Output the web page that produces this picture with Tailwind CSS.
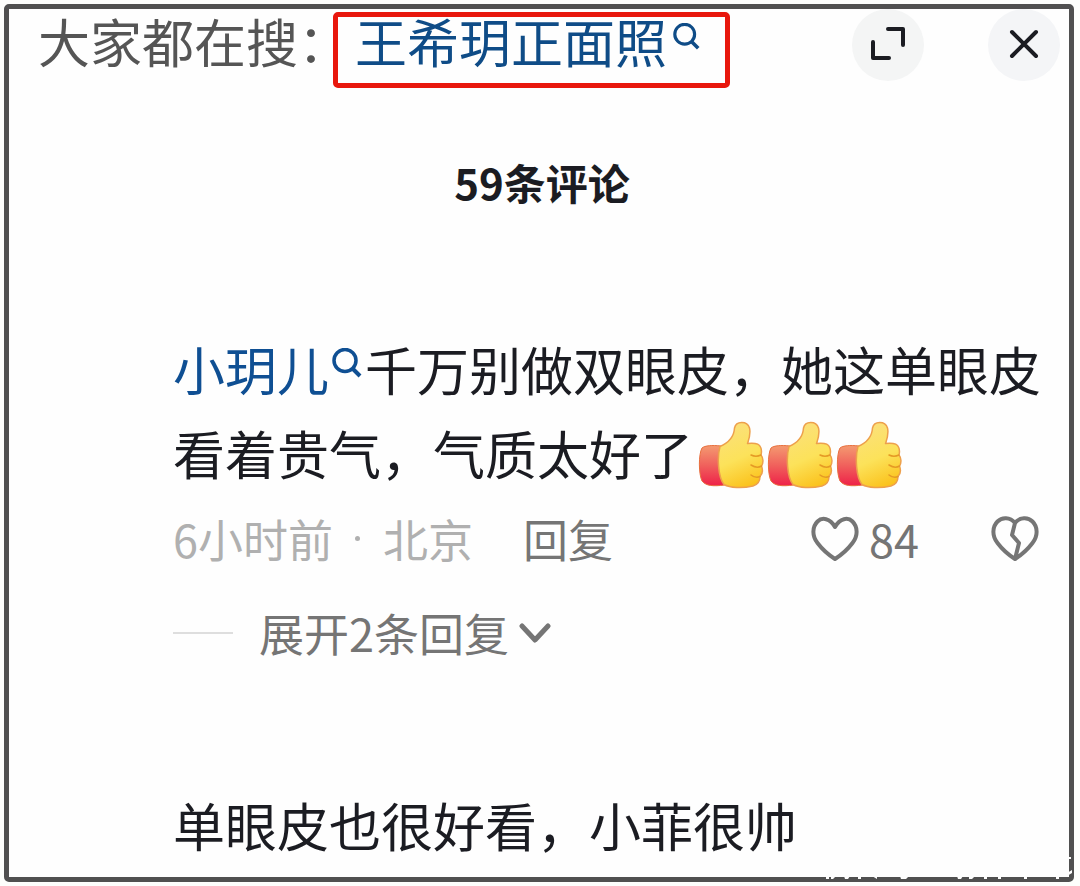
<!DOCTYPE html>
<html lang="zh-CN">
<head>
    <meta charset="UTF-8">
    <meta name="viewport" content="width=device-width, initial-scale=1.0">
    <title>59条评论</title>
    <script src="https://cdn.jsdelivr.net/npm/@tailwindcss/browser@4"></script>
</head>
<body class="bg-[#fdfefc] min-h-screen flex pt-1 pb-1 pl-1 pr-[6px] font-['Noto_Sans_CJK_SC',sans-serif] text-[#1b1c22]">
    <!-- Shared icons -->
    <svg class="absolute w-0 h-0" xmlns="http://www.w3.org/2000/svg">
        <defs>
            <linearGradient id="cuffFill" x1="0" y1="0" x2="0" y2="1">
                <stop offset="0" stop-color="#f49a70"></stop>
                <stop offset="0.5" stop-color="#f0605c"></stop>
                <stop offset="1" stop-color="#ee2148"></stop>
            </linearGradient>
            <linearGradient id="handFill" x1="0.3" y1="0" x2="0.6" y2="1">
                <stop offset="0" stop-color="#fbe07c"></stop>
                <stop offset="0.55" stop-color="#fce25a"></stop>
                <stop offset="1" stop-color="#fbc21c"></stop>
            </linearGradient>
        </defs>
        <symbol id="search" viewBox="0 0 30 30">
            <circle cx="13" cy="12.500" r="11" fill="none" stroke="currentColor" stroke-width="3.500"></circle>
            <path d="M20.500 20.500 28 28" fill="none" stroke="currentColor" stroke-width="4"></path>
        </symbol>
        <symbol id="thumb" viewBox="0 0 66 68">
            <path d="M23 25C14 24 7 24.500 4 27C0.500 33 0.500 53 4 60C8 65 15 65.500 27 64Z" fill="url(#cuffFill)" stroke="#e8703f" stroke-width="1"></path>
            <path d="M22 25.500C30 22 36 16 36.500 7C38 0 49 -0.500 51.500 7C53 13 51 18 49.500 22.500C54 22 61 22 62.500 26C64 29 63.500 32 63 34C65.500 37 65.500 42 63.500 45C65 49 64.500 53 62 55.500C62 60 60 63.500 55 65C44 67.500 32 67 26 63.500C20 56 19 36 22 25.500Z" fill="url(#handFill)" stroke="#eda04c" stroke-width="1.500" stroke-linejoin="round"></path>
            <path d="M53 34C57 36 60 35.500 63 34M53 44C57 46.500 61 46.500 63.500 45M53 54C56 56.500 60 56.500 62 55.500" fill="none" stroke="#e59a25" stroke-width="1.500" stroke-linecap="round"></path>
        </symbol>
    </svg>

    <main class="relative flex-grow flex flex-col border-[5px] border-[#505050] rounded-[5px] bg-[#fefefe]">
        <header class="flex items-start">
            <p class="pl-[29px] pt-2 text-[52px] leading-[48px] text-[#555]">大家都在搜：</p>
            <a href="#" class="-ml-[17px] mt-[3px] flex border-[5px] border-[#e8170d] rounded-[5px] pl-[17px] pr-[25px] pb-[18px] text-[52px] leading-[48px] text-[#0f4c87] relative">
                王希玥正面照
                <svg class="ml-[6px] mt-[6px] w-[27px] h-[27px]"><use href="#search"></use></svg>
            </a>
            <div class="ml-auto pr-[9px] flex gap-[64px]">
                <button type="button" aria-label="展开" class="w-[72px] h-[72px] rounded-full bg-[#f4f5f5] flex items-center justify-center">
                    <svg class="w-9 h-9" viewBox="0 0 36 36" fill="none" stroke="currentColor" stroke-width="4" stroke-linecap="round" stroke-linejoin="round">
                        <path d="M18 2H33V18M3 15V31H19"></path>
                    </svg>
                </button>
                <button type="button" aria-label="关闭" class="w-[72px] h-[72px] rounded-full bg-[#f4f5f7] flex items-center justify-center">
                    <svg class="w-9 h-9" viewBox="0 0 36 36" fill="none" stroke="currentColor" stroke-width="4" stroke-linecap="round">
                        <path d="M6 5 30 29M30 5 6 29"></path>
                    </svg>
                </button>
            </div>
        </header>

        <h1 class="mt-16 pl-[6px] text-center text-[42px] leading-[60px] font-bold">59条评论</h1>

        <ul class="mt-[115px] pl-[164px] pb-[9px]">
            <li>
                <p class="text-[52px] leading-[84px]"><a href="#" class="text-[#0f4f93]">小玥儿<svg class="inline-block align-baseline relative -top-[13px] mx-[3px] w-[30px] h-[30px]"><use href="#search"></use></svg></a>千万别做双眼皮，她这单眼皮看着贵气，气质太好了<span role="img" aria-label="赞赞赞" class="inline-flex align-middle gap-[3px] ml-[5px] pb-3"><svg class="w-[66px] h-[68px]"><use href="#thumb"></use></svg><svg class="w-[66px] h-[68px]"><use href="#thumb"></use></svg><svg class="w-[66px] h-[68px]"><use href="#thumb"></use></svg></span></p>

                <div class="mt-2 pr-[30px] flex items-center text-[45px] leading-[60px] text-[#757575]">
                    <span class="text-[#b0b0b0]">6小时前</span>
                    <span class="w-[50px] flex justify-center"><span class="w-[5px] h-[5px] rounded-full bg-[#b0b0b0]"></span></span>
                    <span class="text-[#b0b0b0]">北京</span>
                    <button type="button" class="ml-[50px]">回复</button>
                    <button type="button" aria-label="点赞 84" class="ml-auto flex items-center gap-[10px]">
                        <svg class="w-12 h-[46px]" viewBox="0 0 48 46" fill="none" stroke="currentColor" stroke-width="4" stroke-linejoin="round">
                            <path d="M24 11C19 2 11 1 6.500 5.500C1 11 1 20 6.500 27C11 33 17 38.500 24 43C31 38.500 37 33 41.500 27C47 20 47 11 41.500 5.500C37 1 29 2 24 11Z"></path>
                        </svg>
                        84
                    </button>
                    <button type="button" aria-label="不喜欢" class="ml-[72px]">
                        <svg class="w-12 h-[46px]" viewBox="0 0 48 46" fill="none" stroke="currentColor" stroke-width="4" stroke-linejoin="round">
                            <path d="M24 7C19 1 11 1 6.500 5.500C1 11 1 20 6.500 27C11 33 17 38.500 24 43C31 38.500 37 33 41.500 27C47 20 47 11 41.500 5.500C37 1 29 1 24 7L21 19L28 27L24 43"></path>
                        </svg>
                    </button>
                </div>

                <button type="button" class="mt-[34px] flex items-center text-[45px] leading-[60px] text-[#757575]">
                    <span class="w-[60px] h-[2px] mr-[26px] bg-[#dedede]"></span>
                    展开2条回复
                    <svg class="ml-[10px] w-8 h-5" viewBox="0 0 32 20" fill="none" stroke="currentColor" stroke-width="5" stroke-linecap="round" stroke-linejoin="round">
                        <path d="M3 3 16 17 29 3"></path>
                    </svg>
                </button>
            </li>
            <li class="mt-[120px] text-[52px] leading-[84px]">单眼皮也很好看，小菲很帅</li>
        </ul>

        <!-- Nicks along the bottom edge -->
        <svg class="absolute right-[-5px] bottom-[-5px] w-[250px] h-[28px]" viewBox="0 0 250 28" fill="#fefefe">
            <path d="M2 22h3v3h-3zM7 22h5l-3 3h-2zM20 22h6l-2 3h-3zM34 22h3v3h-3zM48 22h5v3zM76 22h9l-3 3h-5zM101 22h4l-2 1zM133 22h6l-2 3h-3zM145 22h6l-3 3h-3zM160 22h3v3h-3zM174 22h3v3h-3zM200 22h3v3h-3zM232 22h3v3h-3zM244 3h3v2h-3zM243 19l5-3v3l-5 3z"></path>
        </svg>
    </main>
</body>
</html>
